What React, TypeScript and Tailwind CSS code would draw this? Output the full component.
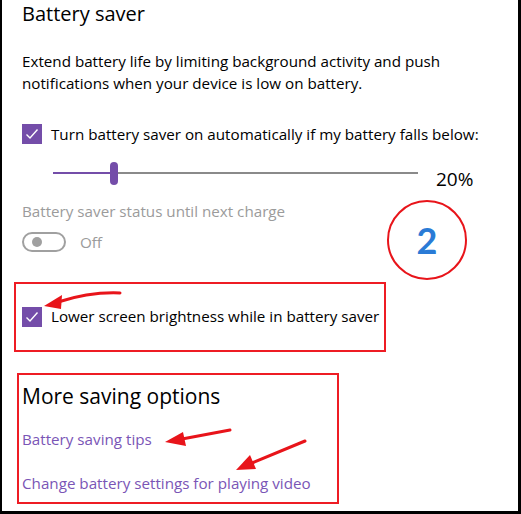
import React from 'react';

const font = { fontFamily: '"Open Sans", "Noto Sans", sans-serif' };

function Check() {
  return (
    <span className="flex h-5 w-5 shrink-0 items-center justify-center bg-[#744da9]">
      <svg width="14" height="12" viewBox="0 0 14 12" fill="none">
        <path d="M1.5 6.5 L5 10 L12.5 1.5" stroke="white" strokeWidth="1.4" />
      </svg>
    </span>
  );
}

function Arrow({ d, head }: { d: string; head: string }) {
  return (
    <g>
      <path d={d} stroke="#e8141a" strokeWidth="3" fill="none" strokeLinecap="round" />
      <path d={head} fill="#e8141a" />
    </g>
  );
}

export default function App() {
  return (
    <div
      className="relative h-[514px] w-[521px] overflow-hidden border-b-[3px] border-l-2 border-r-[3px] border-black bg-white text-black"
      style={font}
    >
      <div className="pl-5">
        <h1 className="text-[20px] leading-[28px]">Battery saver</h1>
        <p className="mt-[22px] w-[450px] text-[15.2px] leading-[22px]">
          Extend battery life by limiting background activity and push notifications when your device is low on battery.
        </p>

        <label className="mt-[29px] flex items-center gap-[9px] text-[15.2px]">
          <Check />
          <span>Turn battery saver on automatically if my battery falls below:</span>
        </label>

        <div className="mt-[8px] flex items-center">
          <div className="relative ml-[31px] h-[24px] w-[365px]">
            <div className="absolute left-0 top-[10px] h-[2px] w-[60px] bg-[#744da9]" />
            <div className="absolute left-[60px] right-0 top-[10px] h-[2px] bg-[#8a8a8a]" />
            <div className="absolute left-[57px] top-0 h-[23px] w-[8px] rounded-full bg-[#744da9]" />
          </div>
          <span className="ml-[18px] mt-[11px] text-[19px]">20%</span>
        </div>

        <div className="mt-[7px] text-[15.2px] text-[#9b9b9b]">Battery saver status until next charge</div>
        <div className="mt-[8px] flex items-center gap-[14px]">
          <div className="flex h-[20px] w-[44px] items-center rounded-full border-2 border-[#a0a0a0] pl-[8px]">
            <span className="h-[10px] w-[10px] rounded-full bg-[#a0a0a0]" />
          </div>
          <span className="text-[15.2px] text-[#9b9b9b]">Off</span>
        </div>
      </div>

      <div className="ml-3 mt-[28px] flex h-[70px] w-[372px] items-center border-2 border-[#ee1c24] pl-[6px]">
        <label className="flex items-center gap-[9px] text-[15.2px]">
          <Check />
          <span>Lower screen brightness while in battery saver</span>
        </label>
      </div>

      <div className="ml-[15px] mt-[21px] flex h-[131px] w-[322px] flex-col border-2 border-[#ee1c24] pl-[3px]">
        <h2 className="mt-[7px] text-[21px] leading-[28px]">More saving options</h2>
        <a className="mt-[18px] text-[15.2px] text-[#7a55b6]">Battery saving tips</a>
        <a className="mt-[21px] text-[15.2px] text-[#7a55b6]">Change battery settings for playing video</a>
      </div>

      {/* annotations */}
      <div className="absolute left-[385px] top-[200px] flex h-[80px] w-[80px] items-center justify-center rounded-full border-2 border-[#e8141a]">
        <span className="text-[36px] font-bold leading-none text-[#2a7bd6]" style={{ fontFamily: '"Lato", sans-serif' }}>2</span>
      </div>
      <svg className="pointer-events-none absolute left-0 top-0" width="521" height="514">
        <Arrow d="M118 293 C95 292 75 296 56 302" head="M42 306 L60 295 L59 309 Z" />
        <Arrow d="M228 430 L180 439" head="M163 442 L181 432 L184 446 Z" />
        <Arrow d="M303 441 L250 463" head="M234 470 L248 455 L254 469 Z" />
      </svg>
    </div>
  );
}
